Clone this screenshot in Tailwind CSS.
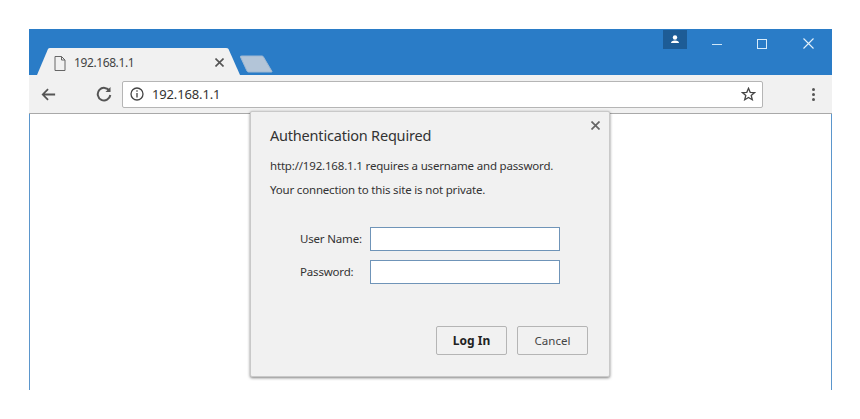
<!DOCTYPE html>
<html lang="en">
<head>
    <meta charset="UTF-8">
    <title>192.168.1.1</title>
    <script src="https://cdn.jsdelivr.net/npm/@tailwindcss/browser@4"></script>
</head>
<body class="bg-white h-[419px] overflow-hidden pt-[29px] pl-[29px] font-['Noto_Sans',sans-serif] text-[#333]">
    <div class="relative w-[803px] h-[361px] flex flex-col">
        <!-- title bar -->
        <div class="relative h-[46px] bg-[#2a7cc7] shrink-0">
            <svg class="absolute left-0 top-[19px]" width="250" height="27" viewBox="0 0 250 27">
                <path d="M8 27 L19 1 Q19.500 0 21 0 L197 0 Q199 0 199.500 1 L211 27 Z" fill="#f1f1f1"/>
                <path d="M211.500 9 Q211 8 212.500 8 L233 8 Q234 8 234.500 9 L243 23.500 Q243.500 24 242 24 L219.500 24 Q218.500 24 218 23 Z" fill="#b3c5d8" stroke="#9fb8d2" stroke-width="1"/>
            </svg>
            <div class="absolute left-[25px] top-[26px] flex items-center h-[16px]">
                <svg width="12" height="15" viewBox="0 0 12 15" fill="none" stroke="#666" stroke-width="1">
                    <path d="M1 .5 H7.500 L11 4 V14.500 H1 Z M7.500 .5 V4 H11"/>
                </svg>
                <span class="ml-[8px] text-[12px] tracking-[-0.4px] text-[#444] leading-none">192.168.1.1</span>
            </div>
            <svg class="absolute left-[186px] top-[29px]" width="9" height="9" viewBox="0 0 9 9" stroke="#555" stroke-width="1.600">
                <path d="M.5 .5 L8.500 8.500 M8.500 .5 L.5 8.500"/>
            </svg>
            <!-- profile badge -->
            <div class="absolute left-[634px] top-[1px] w-[24px] h-[19px] bg-[#1d5c96] flex items-center justify-center">
                <svg width="10" height="9" viewBox="0 0 10 9" fill="#fff">
                    <circle cx="5" cy="2.500" r="2.200"/>
                    <path d="M1 8 Q1 5.500 5 5.500 Q9 5.500 9 8 Z"/>
                </svg>
            </div>
            <!-- window controls -->
            <div class="absolute left-[683px] top-[15px] w-[10px] h-[1px] bg-[#cfe6f7]"></div>
            <div class="absolute left-[728px] top-[10px] w-[10px] h-[10px] border border-[#d8ecfa]"></div>
            <svg class="absolute left-[774px] top-[9px]" width="11" height="11" viewBox="0 0 11 11" stroke="#e4f2fb" stroke-width="1.100">
                <path d="M.5 .5 L10.500 10.500 M10.500 .5 L.5 10.500"/>
            </svg>
        </div>
        <!-- toolbar -->
        <div class="h-[39px] shrink-0 bg-[#f1f1f1] border-b border-[#a9a9a9] flex items-center relative">
            <svg class="ml-[12px]" width="15" height="13" viewBox="0 0 17 14" fill="none" stroke="#555" stroke-width="2">
                <path d="M16 7 H2 M8 1 L2 7 L8 13"/>
            </svg>
            <svg class="ml-[40px]" width="16" height="16" viewBox="0 0 16 16" fill="none" stroke="#555" stroke-width="2">
                <path d="M13.500 5 A6.300 6.300 0 1 0 14.300 9"/>
                <path d="M14.500 1 V6 H9.500 Z" fill="#555" stroke="none"/>
            </svg>
            <div class="ml-[10px] w-[641px] h-[27px] bg-white border border-[#b5b5b5] rounded-[2px] flex items-center">
                <svg class="ml-[7px]" width="14" height="14" viewBox="0 0 14 14" fill="none" stroke="#444" stroke-width="1.300">
                    <circle cx="7" cy="7" r="6"/>
                    <path d="M7 6 V10.500 M7 3.300 V4.800"/>
                </svg>
                <span class="ml-[8px] mt-[1px] text-[13px] tracking-[-0.15px] text-[#333] leading-none">192.168.1.1</span>
                <svg class="ml-auto mr-[6px]" width="15" height="14" viewBox="0 0 15 14" fill="none" stroke="#444" stroke-width="1.300">
                    <path d="M7.500 1.300 L9.200 5.300 L13.600 5.600 L10.200 8.400 L11.300 12.700 L7.500 10.400 L3.700 12.700 L4.800 8.400 L1.400 5.600 L5.800 5.300 Z"/>
                </svg>
            </div>
            <div class="ml-[49px] flex flex-col gap-[2px]">
                <span class="w-[3px] h-[3px] rounded-full bg-[#555]"></span>
                <span class="w-[3px] h-[3px] rounded-full bg-[#555]"></span>
                <span class="w-[3px] h-[3px] rounded-full bg-[#555]"></span>
            </div>
        </div>
        <!-- page -->
        <div class="flex-1 bg-white border-x border-[#5b96cc]"></div>

        <!-- auth dialog -->
        <div class="absolute left-[221px] top-[82px] w-[360px] h-[266px] bg-[#f1f1f1] border border-[#c9c9c9] rounded-[2px] shadow-[0_1px_3px_rgba(0,0,0,0.5)] pl-[19px] pr-[20px] pt-[12px] flex flex-col">
            <svg class="absolute right-[9px] top-[9px]" width="9" height="9" viewBox="0 0 9 9" stroke="#666" stroke-width="1.700">
                <path d="M.5 .5 L8.500 8.500 M8.500 .5 L.5 8.500"/>
            </svg>
            <h1 class="text-[14.5px] leading-[22px] tracking-[-0.2px] text-[#333]">Authentication Required</h1>
            <p class="mt-[12px] text-[11.5px] leading-[16px] tracking-[-0.18px]">http://192.168.1.1 requires a username and password.</p>
            <p class="mt-[8px] text-[11.5px] leading-[16px] tracking-[-0.18px]">Your connection to this site is not private.</p>
            <div class="mt-[29px] pl-[30px] grid grid-cols-[70px_190px] gap-y-[9px] items-center text-[11.5px] tracking-[-0.18px]">
                <label>User Name:</label>
                <input type="text" class="h-[24px] bg-white border border-[#6f94b8] outline-none">
                <label>Password:</label>
                <input type="password" class="h-[24px] bg-white border border-[#6f94b8] outline-none">
            </div>
            <div class="mt-auto mb-[21px] mr-[1px] flex justify-end gap-[10px]">
                <button class="w-[71px] h-[29px] border border-[#b5b5b5] rounded-[2px] bg-[#f1f1f1] text-[12px] font-bold text-[#222]">Log In</button>
                <button class="w-[71px] h-[29px] border border-[#b5b5b5] rounded-[2px] bg-[#f1f1f1] text-[11.5px] text-[#444]">Cancel</button>
            </div>
        </div>
    </div>
</body>
</html>
